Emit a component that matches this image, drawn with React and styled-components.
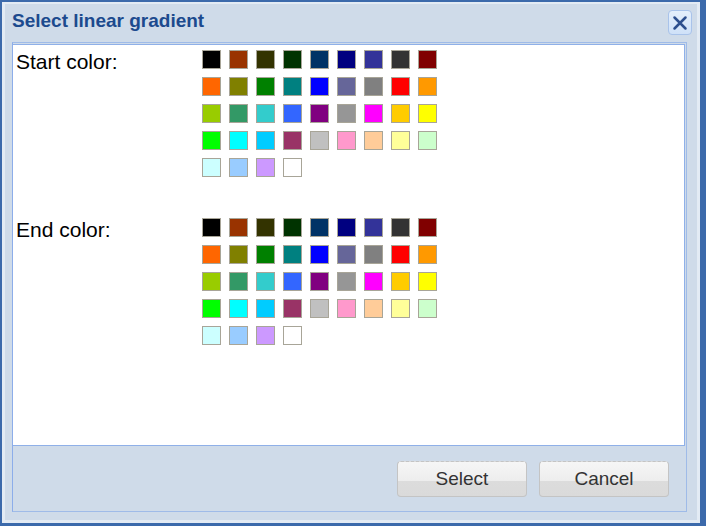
import styled, { createGlobalStyle } from 'styled-components';

const GlobalStyle = createGlobalStyle`
  html, body {
    margin: 0;
    padding: 0;
    background: #3c6aab;
    font-family: 'Liberation Sans', Arial, sans-serif;
  }
`;

const PALETTE = [
  '#000000', '#993300', '#333300', '#003300', '#003366', '#000080', '#333399', '#333333', '#800000',
  '#ff6600', '#808000', '#008000', '#008080', '#0000ff', '#666699', '#808080', '#ff0000', '#ff9900',
  '#99cc00', '#339966', '#33cccc', '#3366ff', '#800080', '#969696', '#ff00ff', '#ffcc00', '#ffff00',
  '#00ff00', '#00ffff', '#00ccff', '#993366', '#c0c0c0', '#ff99cc', '#ffcc99', '#ffff99', '#ccffcc',
  '#ccffff', '#99ccff', '#cc99ff', '#ffffff',
];

function ColorSection({ label }) {
  return (
    <Section>
      <Label>{label}</Label>
      <Grid>
        {PALETTE.map((c) => (
          <Swatch key={c} $color={c} title={c} />
        ))}
      </Grid>
    </Section>
  );
}

export default function App() {
  return (
    <>
      <GlobalStyle />
      <Dialog>
        <TitleBar>
          <Title>Select linear gradient</Title>
          <CloseButton aria-label="Close">
            <svg width="16" height="16" viewBox="0 0 16 16">
              <path
                d="M2.5 2.5 L13.5 13.5 M13.5 2.5 L2.5 13.5"
                stroke="#2d4f8e"
                strokeWidth="2.5"
                strokeLinecap="round"
              />
            </svg>
          </CloseButton>
        </TitleBar>
        <Frame>
          <Panel>
            <ColorSection label="Start color:" />
            <ColorSection label="End color:" />
          </Panel>
          <ButtonRow>
            <Button>Select</Button>
            <Button>Cancel</Button>
          </ButtonRow>
        </Frame>
      </Dialog>
    </>
  );
}

const Dialog = styled.div`
  box-sizing: border-box;
  margin: 2px 6px 0 2px;
  width: 698px;
  height: 521px;
  background: #cfdbe9;
  border-top: 2px solid #e3ebf4;
  border-left: 3px solid #e3ebf4;
  border-right: 3px solid #e3ebf4;
  border-bottom: 3px solid #e3ebf4;
  display: flex;
  flex-direction: column;
`;

const TitleBar = styled.div`
  box-sizing: border-box;
  height: 36px;
  display: flex;
  align-items: flex-start;
  justify-content: space-between;
  padding: 6px 5px 0 7px;
`;

const Title = styled.div`
  font-size: 19px;
  line-height: 21px;
  font-weight: bold;
  color: #1c4a8e;
`;

const CloseButton = styled.div`
  box-sizing: border-box;
  width: 24px;
  height: 25px;
  border: 1px solid #a9c3ea;
  border-radius: 4px;
  background: linear-gradient(#e4effc, #cfe1f8);
  display: flex;
  align-items: center;
  justify-content: center;
`;

const Frame = styled.div`
  box-sizing: border-box;
  margin: 2px 0 0 7px;
  width: 675px;
  height: 470px;
  border: 1px solid #9fbbe8;
  border-left-color: #8cadea;
  padding: 1px 1px 0 0;
  display: flex;
  flex-direction: column;
`;

const Panel = styled.div`
  box-sizing: border-box;
  height: 402px;
  background: #ffffff;
  border: 1px solid #8fb0e8;
  border-left: none;
  padding: 5px 0 0 3px;
`;

const Section = styled.div`
  display: flex;
  align-items: flex-start;
  margin-bottom: 41px;
`;

const Label = styled.div`
  width: 186px;
  font-size: 21px;
  line-height: 24px;
  color: #000;
`;

const Grid = styled.div`
  display: grid;
  grid-template-columns: repeat(9, 19px);
  grid-auto-rows: 19px;
  gap: 8px;
`;

const Swatch = styled.div`
  box-sizing: border-box;
  width: 19px;
  height: 19px;
  border: 1px solid #a8a598;
  background: ${(props) => props.$color};
`;

const ButtonRow = styled.div`
  flex: 1;
  display: flex;
  justify-content: flex-end;
  align-items: center;
  gap: 12px;
  padding-right: 16px;
`;

const Button = styled.div`
  box-sizing: border-box;
  width: 130px;
  height: 36px;
  border: 1px solid #c4c4c4;
  border-top-style: dashed;
  border-radius: 4px;
  background: linear-gradient(#f6f6f6 0%, #ededed 55%, #dcdcdc 56%, #dadada 100%);
  display: flex;
  align-items: center;
  justify-content: center;
  font-size: 19px;
  color: #333;
`;
